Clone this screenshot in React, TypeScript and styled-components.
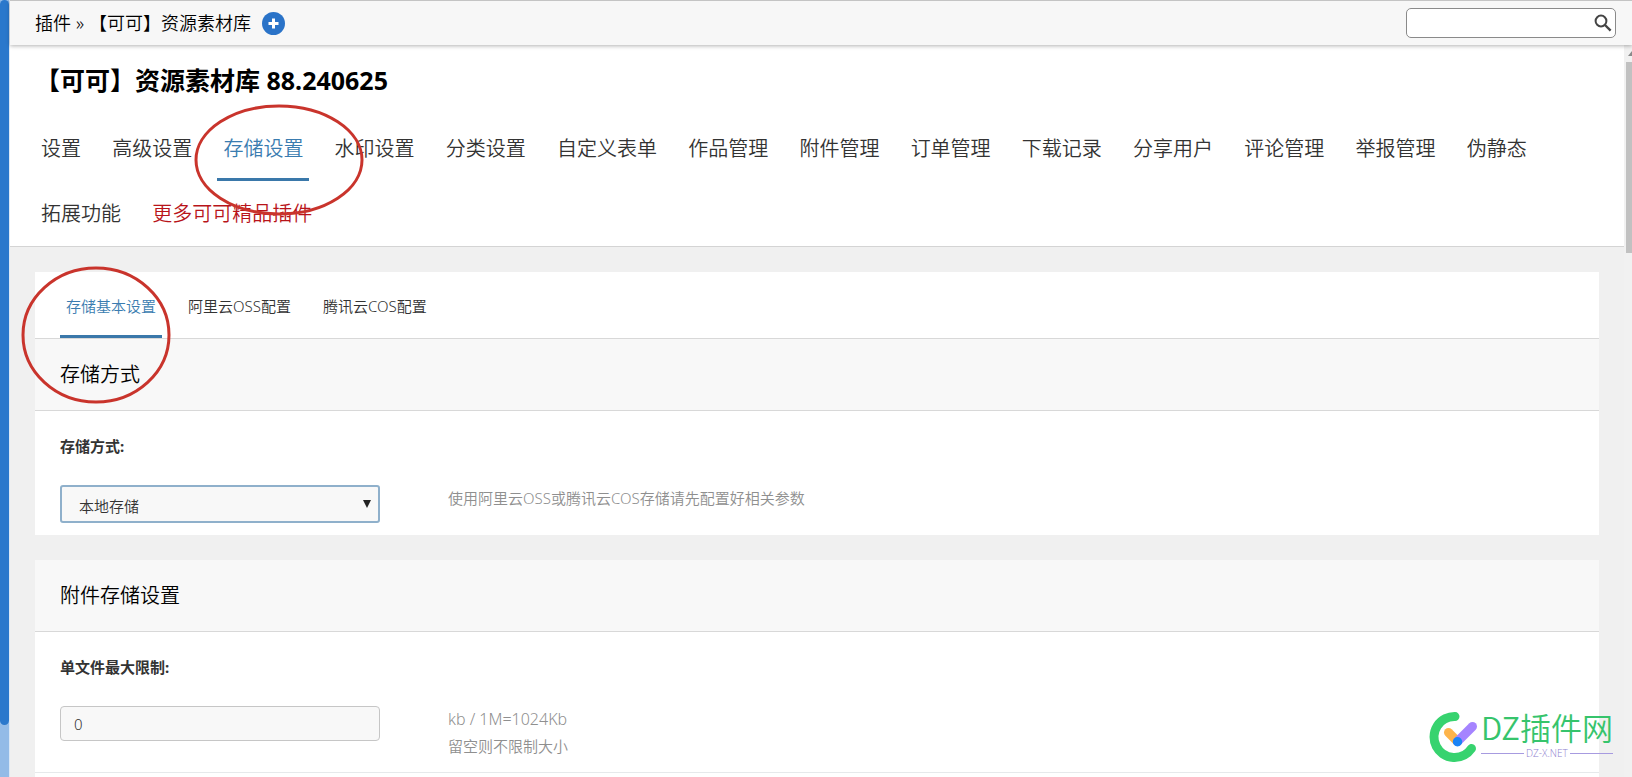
import React from "react";
import styled, { createGlobalStyle } from "styled-components";

const Global = createGlobalStyle`
  *, *::before, *::after { box-sizing: border-box; }
  html, body, #root { height: 100%; }
  body {
    margin: 0;
    overflow: hidden;
    background: #f0f0f0;
    color: #333;
    font-family: "Noto Sans", "Noto Sans CJK SC", sans-serif;
    font-size: 15px;
    font-weight: 350;
  }
  button, input, select { font: inherit; color: inherit; }
`;

const Shell = styled.div`
  position: relative;
  display: flex;
  height: 100vh;
  overflow: hidden;
`;

const Rail = styled.div`
  flex: 0 0 9px;
  background: #93bbe7;
`;

const RailThumb = styled.div`
  height: calc(100% - 52px);
  border-radius: 5px;
  background: #2a78cc;
`;

const RailEdge = styled.div`
  flex: 0 0 1px;
  background: #dbe8f6;
`;

const Frame = styled.div`
  flex: 1;
  min-width: 0;
  display: flex;
  flex-direction: column;
`;

const TopBar = styled.header`
  position: relative;
  z-index: 1;
  flex: 0 0 45px;
  display: flex;
  align-items: center;
  justify-content: space-between;
  padding: 0 16px 0 25px;
  border-top: 1px solid #c4c4c4;
  background: #f7f7f7;
  box-shadow: 0 1px 4px rgba(0, 0, 0, 0.3);
`;

const Crumbs = styled.nav`
  display: flex;
  align-items: center;
  font-size: 18px;
  line-height: 24px;
  color: #000;
`;

const CrumbLink = styled.a`
  color: inherit;
  text-decoration: none;
`;

const CrumbMark = styled.span`
  padding: 0 5px;
`;

const AddButton = styled.button`
  display: flex;
  margin-left: 11px;
  padding: 0;
  border: 0;
  background: none;
`;

const Search = styled.form`
  display: flex;
  align-items: center;
  width: 210px;
  height: 30px;
  padding-right: 3px;
  border: 1px solid #8a8a8a;
  border-radius: 5px;
  background: #fff;
`;

const SearchInput = styled.input`
  flex: 1;
  min-width: 0;
  border: 0;
  outline: 0;
  background: none;
`;

const SearchButton = styled.button`
  display: flex;
  padding: 0;
  border: 0;
  background: none;
`;

const Viewport = styled.div`
  flex: 1;
  min-height: 0;
  display: flex;
`;

const Page = styled.main`
  flex: 1;
  min-width: 0;
  overflow: hidden;
`;

const ScrollTrack = styled.div`
  flex: 0 0 8px;
  display: flex;
  flex-direction: column;
  padding-left: 2px;
  background: #f1f1f1;
`;

const ScrollArrow = styled.svg`
  flex: 0 0 17px;
  width: 6px;
`;

const ScrollThumb = styled.div`
  height: 191px;
  background: #c1c1c1;
`;

const Intro = styled.section`
  padding: 16px 25px 0;
  border-bottom: 1px solid #d4d4d4;
  background: #fff;
`;

const Title = styled.h1`
  margin: 0;
  font-size: 25px;
  line-height: 38px;
  font-weight: 700;
  color: #000;
`;

const NavItems = styled.nav`
  padding: 17px 0 0;
  font-size: 20px;
  line-height: 65px;
`;

const NavLink = styled.a<{ $active?: boolean; $hot?: boolean }>`
  display: inline-block;
  margin: 0 14px 0 0;
  padding: 0 6px;
  text-decoration: none;
  color: ${(p) => (p.$hot ? "#b8141a" : p.$active ? "#3a7cb0" : "#333")};
  background: ${(p) =>
    p.$active ? "linear-gradient(#3a78aa, #3a78aa) 0 bottom / 100% 3px no-repeat" : "none"};
`;

const Cards = styled.div`
  display: flex;
  flex-direction: column;
  gap: 25px;
  padding: 25px;
`;

const Card = styled.section`
  background: #fff;
`;

const Tabs = styled.nav`
  display: flex;
  gap: 20px;
  padding: 0 25px;
  border-bottom: 1px solid #d8d8d8;
`;

const Tab = styled.a<{ $active?: boolean }>`
  height: 66px;
  padding: 0 6px;
  line-height: 68px;
  text-decoration: none;
  color: ${(p) => (p.$active ? "#3a7cb0" : "#333")};
  border-bottom: 3px solid ${(p) => (p.$active ? "#3a78aa" : "transparent")};
`;

const CardHead = styled.h2`
  margin: 0;
  padding: 0 25px;
  border-bottom: 1px solid #d8d8d8;
  background: #f8f8f8;
  font-size: 20px;
  font-weight: 350;
  line-height: 71px;
  color: #000;
`;

const Row = styled.div`
  padding: 24px 25px 12px;
  border-bottom: 1px solid #e6e9eb;

  &:last-child { border-bottom: 0; }
`;

const Label = styled.label`
  display: block;
  margin-bottom: 28px;
  font-weight: 700;
  line-height: 22px;
`;

const Field = styled.div`
  display: flex;
  align-items: flex-start;
  gap: 68px;
`;

const SelectWrap = styled.div`
  position: relative;
  width: 320px;
`;

const Select = styled.select`
  display: block;
  width: 100%;
  height: 38px;
  padding: 4px 17px 0;
  border: 2px solid #8fb0cb;
  border-radius: 3px;
  appearance: none;
  background: #f8f8f8;
`;

const Caret = styled.svg`
  position: absolute;
  right: 9px;
  top: 15px;
  pointer-events: none;
`;

const TextInput = styled.input`
  width: 320px;
  height: 35px;
  padding: 0 13px;
  border: 1px solid #c6c6c6;
  border-radius: 4px;
  background: #f8f8f8;
`;

const Hint = styled.p`
  margin: 0;
  line-height: 27px;
  color: #8f8f8f;
`;

const Units = styled.span`
  display: block;
  font-size: 16px;
`;

const Rings = styled.svg`
  position: absolute;
  left: 0;
  top: 0;
  width: 400px;
  height: 420px;
  pointer-events: none;
  z-index: 2;
`;

const Brand = styled.div`
  position: absolute;
  right: 19px;
  bottom: 14px;
  z-index: 2;
  display: flex;
  align-items: flex-end;
  gap: 3px;
`;

const BrandText = styled.div`
  display: flex;
  flex-direction: column;
  padding-bottom: 4px;
`;

const BrandName = styled.span`
  margin-bottom: 2px;
  font-family: "Noto Sans CJK SC", sans-serif;
  font-size: 31px;
  line-height: 36px;
  color: #36c46c;
`;

const BrandSite = styled.span`
  display: flex;
  align-items: center;
  gap: 2px;
  font-family: "Open Sans", sans-serif;
  font-size: 10px;
  font-weight: 300;
  line-height: 12px;
  color: #8f7fd0;

  &::before, &::after {
    content: "";
    flex: 1;
    height: 1px;
    background: #a79be0;
  }
`;

const NAV = [
  "设置", "高级设置", "存储设置", "水印设置", "分类设置", "自定义表单", "作品管理", "附件管理",
  "订单管理", "下载记录", "分享用户", "评论管理", "举报管理", "伪静态", "拓展功能", "更多可可精品插件",
];
const TABS = ["存储基本设置", "阿里云OSS配置", "腾讯云COS配置"];

export default function App() {
  return (
    <Shell>
      <Global />
      <Rail><RailThumb /></Rail>
      <RailEdge />
      <Frame>
        <TopBar>
          <Crumbs>
            <CrumbLink href="#plugins">插件</CrumbLink>
            <CrumbMark>»</CrumbMark>
            <span>【可可】资源素材库</span>
            <AddButton type="button" aria-label="添加">
              <svg width="23" height="23" viewBox="0 0 23 23">
                <circle cx="11.5" cy="11.5" r="11.5" fill="#2a73c8" />
                <path d="M11.5 6.5v10M6.5 11.5h10" stroke="#fff" strokeWidth="3" />
              </svg>
            </AddButton>
          </Crumbs>
          <Search onSubmit={(e) => e.preventDefault()}>
            <SearchInput type="text" aria-label="搜索" />
            <SearchButton type="submit" aria-label="搜索">
              <svg width="18" height="18" viewBox="0 0 18 18" fill="none" stroke="#444">
                <circle cx="7" cy="7" r="5.4" strokeWidth="2" />
                <path d="M11 11l5.6 5.6" strokeWidth="2.4" />
              </svg>
            </SearchButton>
          </Search>
        </TopBar>
        <Viewport>
          <Page>
            <Intro>
              <Title>【可可】资源素材库 88.240625</Title>
              <NavItems>
                {NAV.map((name) => (
                  <React.Fragment key={name}>
                    <NavLink
                      href={"#" + name}
                      $active={name === "存储设置"}
                      $hot={name === "更多可可精品插件"}
                    >
                      {name}
                    </NavLink>{" "}
                  </React.Fragment>
                ))}
              </NavItems>
            </Intro>
            <Cards>
              <Card>
                <Tabs>
                  {TABS.map((name, i) => (
                    <Tab key={name} href={"#" + name} $active={i === 0}>{name}</Tab>
                  ))}
                </Tabs>
                <CardHead>存储方式</CardHead>
                <Row>
                  <Label htmlFor="storage">存储方式:</Label>
                  <Field>
                    <SelectWrap>
                      <Select id="storage" defaultValue="local">
                        <option value="local">本地存储</option>
                        <option value="oss">阿里云OSS</option>
                        <option value="cos">腾讯云COS</option>
                      </Select>
                      <Caret width="8" height="8" viewBox="0 0 8 8">
                        <path d="M0 0h8L4 8z" fill="#222" />
                      </Caret>
                    </SelectWrap>
                    <Hint>使用阿里云OSS或腾讯云COS存储请先配置好相关参数</Hint>
                  </Field>
                </Row>
              </Card>
              <Card>
                <CardHead>附件存储设置</CardHead>
                <Row>
                  <Label htmlFor="max-size">单文件最大限制:</Label>
                  <Field>
                    <TextInput id="max-size" type="text" defaultValue="0" />
                    <Hint><Units>kb / 1M=1024Kb</Units>留空则不限制大小</Hint>
                  </Field>
                </Row>
                <Row />
              </Card>
            </Cards>
          </Page>
          <ScrollTrack>
            <ScrollArrow viewBox="0 0 6 17"><path d="M2 11l4-5v5z" fill="#8a8a8a" /></ScrollArrow>
            <ScrollThumb />
          </ScrollTrack>
        </Viewport>
      </Frame>
      <Rings viewBox="0 0 400 420" fill="none" stroke="#c9342c" strokeWidth="3">
        <ellipse cx="279" cy="160" rx="83" ry="54" />
        <ellipse cx="96" cy="335" rx="73" ry="67" />
      </Rings>
      <Brand>
        <svg width="49" height="52" viewBox="0 0 49 52" fill="none" strokeLinecap="round">
          <path d="M26 5.500A20.500 20.500 0 1 0 42.500 37.500" stroke="#37d36f" strokeWidth="9" />
          <path d="M19.500 21.500l9 9" stroke="#fdb44b" strokeWidth="9" />
          <path d="M28.500 30.500l15-15" stroke="#a584ff" strokeWidth="9" />
          <circle cx="28.500" cy="30.800" r="4.700" fill="#1c84f5" />
        </svg>
        <BrandText>
          <BrandName>DZ插件网</BrandName>
          <BrandSite>DZ-X.NET</BrandSite>
        </BrandText>
      </Brand>
    </Shell>
  );
}
